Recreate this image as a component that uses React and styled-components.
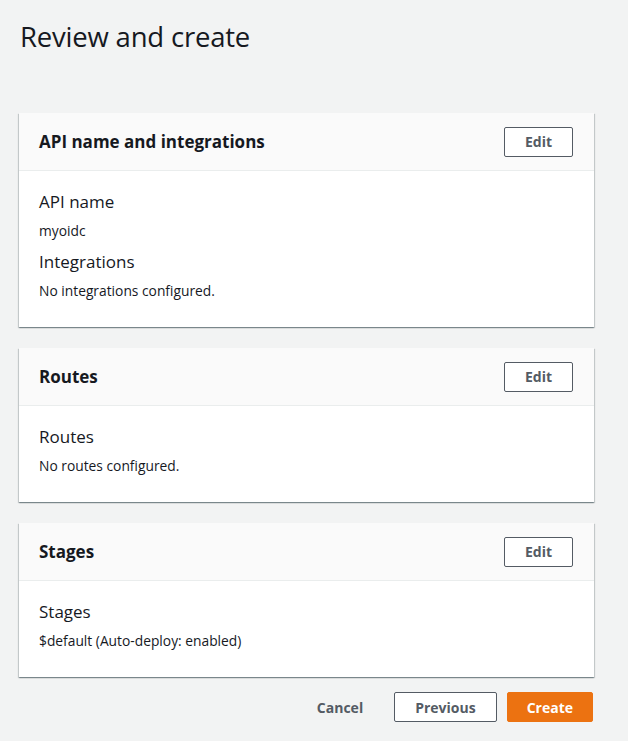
import React from 'react';
import styled, { createGlobalStyle } from 'styled-components';

const Global = createGlobalStyle`
  :root{
    --bg:#f2f3f3;
    --text:#16191f;
    --muted:#545b64;
    --head:#fafafa;
    --line:#eaeded;
    --orange:#ec7211;
  }
  html, body { margin: 0; background: var(--bg); }
  body {
    color: var(--text);
    font-family: "Open Sans", "Noto Sans", Arial, sans-serif;
  }
`;

const Page = styled.div`
  width: 575px;
  padding: 20px 0 20px 19px;
`;

const Title = styled.h1`
  margin: 0 0 59px 1px;
  font-size: 27.5px;
  line-height: 34px;
  font-weight: 400;
  letter-spacing: -0.2px;
`;

const Stack = styled.div`
  display: flex;
  flex-direction: column;
  gap: 21px;
`;

const Card = styled.section`
  background: #fff;
  box-shadow: 0 1px 1px 0 rgba(0,28,36,.3), 1px 1px 1px 0 rgba(0,28,36,.15), -1px 1px 1px 0 rgba(0,28,36,.15);
`;

const CardHead = styled.div`
  height: 58px;
  box-sizing: border-box;
  display: flex;
  align-items: center;
  justify-content: space-between;
  padding: 0 21px 0 20px;
  background: var(--head);
  border-bottom: 1px solid var(--line);
  h2 {
    margin: 0;
    font-size: 17px;
    font-weight: 700;
  }
`;

const CardBody = styled.div`
  padding: 20px 20px 26px;
`;

const Label = styled.div`
  font-size: 17px;
  line-height: 22px;
  & + & { margin-top: 8px; }
`;

const Value = styled.div`
  font-size: 13.8px;
  line-height: 20px;
  margin-top: 8px;
  & + ${Label} { margin-top: 10px; }
`;

const Button = styled.button`
  height: 30px;
  box-sizing: border-box;
  padding: 0 ${p => p.$variant === 'primary' ? 19 : 20}px;
  border-radius: 2px;
  font-family: inherit;
  font-size: 14px;
  font-weight: 700;
  cursor: pointer;
  border: 1px solid ${p => p.$variant === 'primary' ? 'var(--orange)' : p.$variant === 'link' ? 'transparent' : 'var(--muted)'};
  background: ${p => p.$variant === 'primary' ? 'var(--orange)' : p.$variant === 'link' ? 'transparent' : '#fff'};
  color: ${p => p.$variant === 'primary' ? '#fff' : 'var(--muted)'};
`;

const Actions = styled.div`
  display: flex;
  justify-content: flex-end;
  gap: 10px;
  margin-top: 15px;
  margin-right: 1px;
`;

const sections = [
  {
    title: 'API name and integrations',
    rows: [
      ['API name', 'myoidc'],
      ['Integrations', 'No integrations configured.'],
    ],
  },
  { title: 'Routes', rows: [['Routes', 'No routes configured.']] },
  { title: 'Stages', rows: [['Stages', '$default (Auto-deploy: enabled)']] },
];

export default function App() {
  return (
    <>
      <Global />
      <Page>
        <Title>Review and create</Title>
        <Stack>
          {sections.map(s => (
            <Card key={s.title}>
              <CardHead>
                <h2>{s.title}</h2>
                <Button>Edit</Button>
              </CardHead>
              <CardBody>
                {s.rows.map(([label, value]) => (
                  <React.Fragment key={label}>
                    <Label>{label}</Label>
                    <Value>{value}</Value>
                  </React.Fragment>
                ))}
              </CardBody>
            </Card>
          ))}
        </Stack>
        <Actions>
          <Button $variant="link">Cancel</Button>
          <Button>Previous</Button>
          <Button $variant="primary">Create</Button>
        </Actions>
      </Page>
    </>
  );
}
